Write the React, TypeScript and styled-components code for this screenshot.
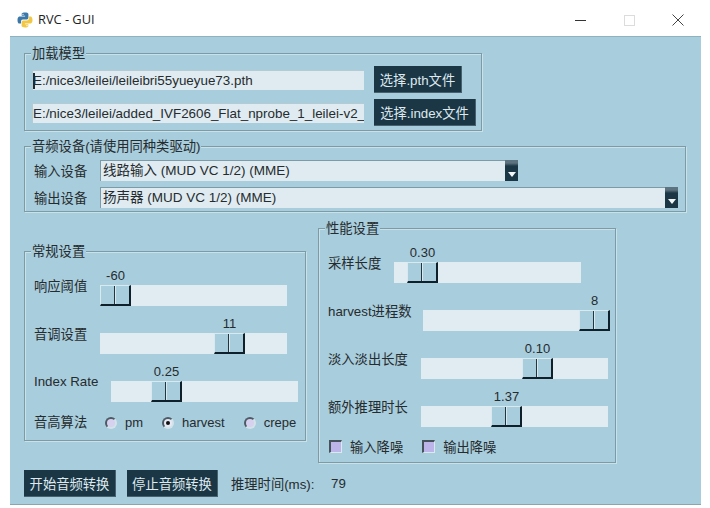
import * as React from 'react'
import styled, { createGlobalStyle } from 'styled-components'

const Global = createGlobalStyle`
  html, body {
    margin: 0;
    padding: 0;
    background: #fff;
    font-family: "Liberation Sans", "Noto Sans CJK SC", sans-serif;
    font-size: 13.3px;
    color: #262b2e;
  }
`

const Page = styled.div`
  width: 710px;
  height: 508px;
  overflow: hidden;
`

const TitleBar = styled.div`
  display: flex;
  align-items: center;
  height: 36px;
  padding: 3px 8px 0 17px;
  box-sizing: border-box;
`

const Title = styled.span`
  margin-left: 5px;
  padding-bottom: 2px;
  font-family: "Open Sans", sans-serif;
  font-size: 12.8px;
  color: #222;
`

const Controls = styled.div`
  display: flex;
  margin-left: auto;
`

const ControlButton = styled.div`
  display: flex;
  align-items: center;
  justify-content: center;
  width: 49px;
  height: 24px;
`

const Panel = styled.div`
  width: 691px;
  height: 469px;
  margin-left: 10px;
  padding: 16px 0 0 14px;
  box-sizing: border-box;
  background: #a8cddc;
  border-top: 1px solid #8fb2bf;
  border-bottom: 1px solid #8aa5ae;
`

const Frame = styled.div<{ $width: number; $pad: string }>`
  position: relative;
  width: ${p => p.$width}px;
  padding: ${p => p.$pad};
  box-sizing: border-box;
  border: 1px solid #7d9ba6;
  box-shadow: 1px 1px 0 #c9e2ea, inset 1px 1px 0 #c9e2ea;
`

const Legend = styled.span`
  position: absolute;
  top: -8px;
  left: 6px;
  padding: 0 1px;
  background: #a8cddc;
  line-height: 16px;
`

const Row = styled.div<{ $gap?: number }>`
  display: flex;
  align-items: center;
  gap: ${p => p.$gap ?? 0}px;
`

const CheckRow = styled(Row)`
  margin-left: 1px;
`

const Stack = styled.div<{ $gap: number }>`
  display: flex;
  flex-direction: column;
  gap: ${p => p.$gap}px;
`

const Field = styled.div<{ $caret?: boolean }>`
  position: relative;
  width: 332px;
  height: 20px;
  box-sizing: border-box;
  background: #dfebf1;
  border-top: 1px solid #b4cbd4;
  border-left: 1px solid #b4cbd4;
  font-size: 13.4px;
  line-height: 19px;
  white-space: nowrap;
  overflow: hidden;

  &::before {
    content: '';
    display: ${p => (p.$caret ? 'block' : 'none')};
    position: absolute;
    top: 2px;
    bottom: 1px;
    left: 0;
    width: 2px;
    background: #1d2b33;
  }
`

const DarkButton = styled.div<{ $width: number; $gapLeft?: number }>`
  display: flex;
  align-items: center;
  justify-content: center;
  flex: none;
  width: ${p => p.$width}px;
  height: 27px;
  margin-left: ${p => p.$gapLeft ?? 0}px;
  background: #1b3746;
  color: #dfe9ee;
  border-right: 1px solid #47616e;
  border-bottom: 1px solid #47616e;
  box-sizing: border-box;
`

const DeviceLabel = styled.span`
  flex: none;
  width: 66px;
`

const Combo = styled.div<{ $width: number }>`
  display: flex;
  width: ${p => p.$width}px;
  height: 21px;
`

const ComboText = styled.div`
  flex: 1;
  padding-left: 2px;
  background: #dfebf1;
  border-top: 1px solid #7d9ba6;
  border-left: 1px solid #7d9ba6;
  font-size: 13.5px;
  line-height: 20px;
`

const ComboArrow = styled.div`
  display: flex;
  align-items: flex-end;
  justify-content: center;
  flex: none;
  width: 13px;
  padding-bottom: 3px;
  box-sizing: border-box;
  background: linear-gradient(#5d7480 0, #5d7480 3px, #1b3746 6px);
`

const Columns = styled.div`
  display: flex;
  align-items: center;
  gap: 12px;
  margin-top: 16px;
`

const SliderLabel = styled.span<{ $width: number }>`
  flex: none;
  width: ${p => p.$width}px;
  padding-bottom: 3px;
`

const SliderBox = styled.div`
  flex: none;
  width: 187px;
`

const SliderValue = styled.div<{ $offset: number }>`
  width: 31px;
  height: 17px;
  margin-left: ${p => p.$offset}px;
  display: flex;
  justify-content: center;
  font-size: 13px;
  line-height: 15px;
  white-space: nowrap;
`

const Track = styled.div`
  height: 21px;
  background: #e0ecf1;
`

const Thumb = styled.div<{ $offset: number }>`
  position: relative;
  width: 31px;
  height: 21px;
  margin-left: ${p => p.$offset}px;
  box-sizing: border-box;
  background: #a8cddc;
  border-top: 1px solid #d8e9ef;
  border-left: 1px solid #d8e9ef;
  border-right: 2px solid #10202a;
  border-bottom: 2px solid #10202a;

  &::after {
    content: '';
    position: absolute;
    top: 0;
    bottom: 0;
    left: 13px;
    width: 1px;
    background: #23363f;
    box-shadow: 1px 0 0 #d8e9ef;
  }
`

const RadioOption = styled.span`
  display: flex;
  align-items: center;
  gap: 8px;
  margin-right: 19px;
  font-size: 13px;
`

const Radio = styled.span<{ $checked?: boolean }>`
  display: flex;
  align-items: center;
  justify-content: center;
  width: 12px;
  height: 12px;
  box-sizing: border-box;
  border-radius: 50%;
  background: ${p => (p.$checked ? '#e6e8f4' : '#d6d1ef')};
  border: 2px solid;
  border-color: #4d5a66 #d2e3ea #d2e3ea #4d5a66;

  &::after {
    content: '';
    display: ${p => (p.$checked ? 'block' : 'none')};
    width: 4px;
    height: 4px;
    border-radius: 50%;
    background: #111;
  }
`

const CheckOption = styled.span`
  display: flex;
  align-items: center;
  gap: 8px;
`

const CheckBox = styled.span`
  width: 13px;
  height: 13px;
  box-sizing: border-box;
  background: #bdb5ea;
  border-top: 2px solid #46525c;
  border-left: 2px solid #46525c;
  border-right: 1px solid #d9e9ee;
  border-bottom: 1px solid #d9e9ee;
`

const Footer = styled.div`
  display: flex;
  align-items: center;
  margin-top: 7px;
`

const Elapsed = styled.span`
  margin-left: 13px;
  width: 100px;
`

const Slider = ({ label, width, value, offset }: { label: string; width: number; value: string; offset: number }) => (
  <Row>
    <SliderLabel $width={width}>{label}</SliderLabel>
    <SliderBox>
      <SliderValue $offset={offset}>{value}</SliderValue>
      <Track>
        <Thumb $offset={offset} />
      </Track>
    </SliderBox>
  </Row>
)

const snake =
  'M15.9 1C9 1 9.4 4 9.4 4v3.6h6.8v1.2H5.7S1 8.300 1 15.900s4.100 7.300 4.100 7.300h2.900v-3.900s-.1-4.100 4-4.100h6.900s3.900.1 3.900-3.700V4.800S23.900 1 15.900 1zM12 3.400a1.300 1.300 0 1 1 0 2.600 1.300 1.300 0 0 1 0-2.600z'

const PythonLogo = () => (
  <svg width="16" height="16" viewBox="0 0 32 32">
    <path fill="#3b78a9" d={snake} />
    <path fill="#f2c744" transform="rotate(180 16 16)" d={snake} />
  </svg>
)

const DownArrow = () => (
  <svg width="8" height="6" viewBox="0 0 8 6">
    <path fill="#f4f7f8" d="M0 0h8L4 5z" />
  </svg>
)

export default function App() {
  return (
    <Page>
      <Global />
      <TitleBar>
        <PythonLogo />
        <Title>RVC - GUI</Title>
        <Controls>
          <ControlButton>
            <svg width="12" height="12" viewBox="0 0 12 12">
              <path d="M1 6.500h11" stroke="#333" strokeWidth="1" />
            </svg>
          </ControlButton>
          <ControlButton>
            <svg width="12" height="12" viewBox="0 0 12 12">
              <rect x="1.500" y="1.500" width="10" height="10" fill="none" stroke="#dcdcdc" />
            </svg>
          </ControlButton>
          <ControlButton>
            <svg width="12" height="12" viewBox="0 0 12 12">
              <path d="M.5.500l11 11M11.500.500l-11 11" stroke="#444" strokeWidth="1" />
            </svg>
          </ControlButton>
        </Controls>
      </TitleBar>
      <Panel>
        <Stack $gap={15}>
          <Frame $width={458} $pad="12px 0 4px 7px">
            <Legend>加载模型</Legend>
            <Stack $gap={6}>
              <Row $gap={10}>
                <Field $caret>E:/nice3/leilei/leileibri55yueyue73.pth</Field>
                <DarkButton $width={88}>选择.pth文件</DarkButton>
              </Row>
              <Row $gap={10}>
                <Field>E:/nice3/leilei/added_IVF2606_Flat_nprobe_1_leilei-v2_</Field>
                <DarkButton $width={102}>选择.index文件</DarkButton>
              </Row>
            </Stack>
          </Frame>
          <Frame $width={662} $pad="13px 0 3px 9px">
            <Legend>音频设备(请使用同种类驱动)</Legend>
            <Stack $gap={6}>
              <Row>
                <DeviceLabel>输入设备</DeviceLabel>
                <Combo $width={418}>
                  <ComboText>线路输入 (MUD VC 1/2) (MME)</ComboText>
                  <ComboArrow>
                    <DownArrow />
                  </ComboArrow>
                </Combo>
              </Row>
              <Row>
                <DeviceLabel>输出设备</DeviceLabel>
                <Combo $width={578}>
                  <ComboText>扬声器 (MUD VC 1/2) (MME)</ComboText>
                  <ComboArrow>
                    <DownArrow />
                  </ComboArrow>
                </Combo>
              </Row>
            </Stack>
          </Frame>
        </Stack>
        <Columns>
          <Frame $width={282} $pad="16px 0 6px 9px">
            <Legend>常规设置</Legend>
            <Stack $gap={10}>
              <Slider label="响应阈值" width={66} value="-60" offset={0} />
              <Slider label="音调设置" width={66} value="11" offset={114} />
              <Slider label="Index Rate" width={77} value="0.25" offset={40} />
              <Row>
                <SliderLabel $width={71}>音高算法</SliderLabel>
                <RadioOption>
                  <Radio />
                  pm
                </RadioOption>
                <RadioOption>
                  <Radio $checked />
                  harvest
                </RadioOption>
                <RadioOption>
                  <Radio />
                  crepe
                </RadioOption>
              </Row>
            </Stack>
          </Frame>
          <Frame $width={298} $pad="16px 0 6px 9px">
            <Legend>性能设置</Legend>
            <Stack $gap={10}>
              <Slider label="采样长度" width={66} value="0.30" offset={13} />
              <Slider label="harvest进程数" width={95} value="8" offset={156} />
              <Slider label="淡入淡出长度" width={93} value="0.10" offset={101} />
              <Slider label="额外推理时长" width={93} value="1.37" offset={70} />
              <CheckRow $gap={19}>
                <CheckOption>
                  <CheckBox />
                  输入降噪
                </CheckOption>
                <CheckOption>
                  <CheckBox />
                  输出降噪
                </CheckOption>
              </CheckRow>
            </Stack>
          </Frame>
        </Columns>
        <Footer>
          <DarkButton $width={92}>开始音频转换</DarkButton>
          <DarkButton $width={91} $gapLeft={11}>
            停止音频转换
          </DarkButton>
          <Elapsed>推理时间(ms):</Elapsed>
          <span>79</span>
        </Footer>
      </Panel>
    </Page>
  )
}
